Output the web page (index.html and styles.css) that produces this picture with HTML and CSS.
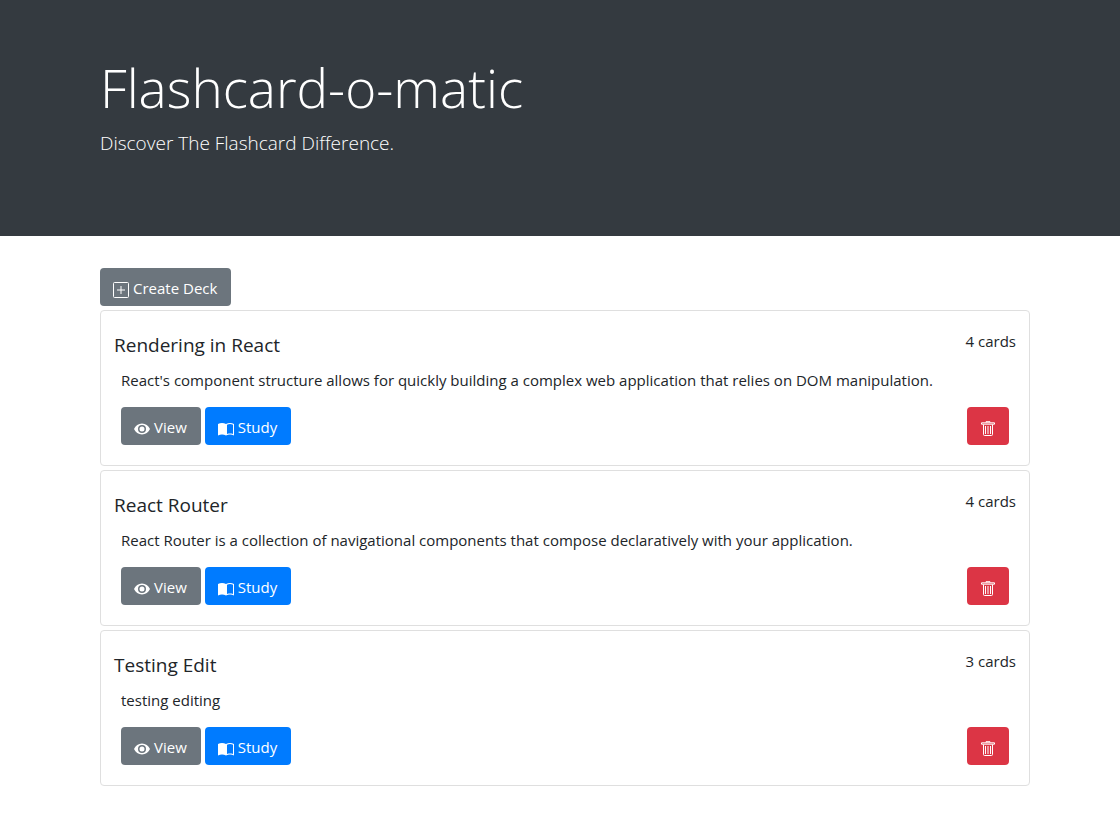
FILE: index.html
```html
<!DOCTYPE html>
<html lang="en">
<head>
<meta charset="utf-8">
<meta name="viewport" content="width=device-width, initial-scale=1">
<title>Flashcard-o-matic</title>
<link rel="stylesheet" href="styles.css">
</head>
<body>
<svg class="sprite" aria-hidden="true">
  <symbol id="plus" viewBox="0 0 16 16"><rect x=".5" y=".5" width="15" height="15" rx="1" fill="none" stroke="currentColor"/><path d="M8 4v8M4 8h8" fill="none" stroke="currentColor"/></symbol>
  <symbol id="eye" viewBox="0 0 16 16"><path fill="currentColor" fill-rule="evenodd" d="M8 2.5C4.4 2.5 1.500 4.700 0 8c1.500 3.300 4.400 5.500 8 5.500s6.500-2.200 8-5.500c-1.500-3.300-4.400-5.500-8-5.500zM8 4a4 4 0 1 1 0 8 4 4 0 0 1 0-8zm0 1.500a2.500 2.500 0 1 0 0 5 2.500 2.500 0 0 0 0-5z"/></symbol>
  <symbol id="book" viewBox="0 0 16 16"><path fill="currentColor" fill-rule="evenodd" d="M0 3C2.500 1.600 5.500 1.600 8 3c2.500-1.400 5.500-1.400 8 0v11.500c-2.500-1.200-5.500-1.200-8 0-2.500-1.200-5.500-1.200-8 0zM9 3.700v9.300c2-.6 4-.6 6 0V3.700c-2-.8-4-.8-6 0z"/></symbol>
  <symbol id="trash" viewBox="0 0 16 16"><path fill="none" stroke="currentColor" d="M1.500 1.800h13v1.400h-13zM6 1.500V.7h4v.8M3.500 3.500v10a1 1 0 0 0 1 1h7a1 1 0 0 0 1-1v-10M5.500 5v8M10.500 5v8"/><path fill="none" stroke="currentColor" stroke-width="2" opacity=".5" d="M8 5v8"/></symbol>
</svg>
<header class="hero">
  <div class="container">
    <h1 class="hero-title">Flashcard-o-matic</h1>
    <p class="hero-lead">Discover The Flashcard Difference.</p>
  </div>
</header>
<main class="container">
  <button class="btn btn-secondary" type="button"><svg class="icon"><use href="#plus"/></svg>Create Deck</button>
  <article class="deck">
    <div class="deck-head"><h2 class="deck-title">Rendering in React</h2><span>4 cards</span></div>
    <p class="deck-text">React's component structure allows for quickly building a complex web application that relies on DOM manipulation.</p>
    <div class="deck-actions">
      <button class="btn btn-secondary" type="button"><svg class="icon"><use href="#eye"/></svg>View</button>
      <button class="btn btn-primary" type="button"><svg class="icon"><use href="#book"/></svg>Study</button>
      <button class="btn btn-danger" type="button" aria-label="Delete deck"><svg class="icon"><use href="#trash"/></svg></button>
    </div>
  </article>
  <article class="deck">
    <div class="deck-head"><h2 class="deck-title">React Router</h2><span>4 cards</span></div>
    <p class="deck-text">React Router is a collection of navigational components that compose declaratively with your application.</p>
    <div class="deck-actions">
      <button class="btn btn-secondary" type="button"><svg class="icon"><use href="#eye"/></svg>View</button>
      <button class="btn btn-primary" type="button"><svg class="icon"><use href="#book"/></svg>Study</button>
      <button class="btn btn-danger" type="button" aria-label="Delete deck"><svg class="icon"><use href="#trash"/></svg></button>
    </div>
  </article>
  <article class="deck">
    <div class="deck-head"><h2 class="deck-title">Testing Edit</h2><span>3 cards</span></div>
    <p class="deck-text">testing editing</p>
    <div class="deck-actions">
      <button class="btn btn-secondary" type="button"><svg class="icon"><use href="#eye"/></svg>View</button>
      <button class="btn btn-primary" type="button"><svg class="icon"><use href="#book"/></svg>Study</button>
      <button class="btn btn-danger" type="button" aria-label="Delete deck"><svg class="icon"><use href="#trash"/></svg></button>
    </div>
  </article>
</main>
</body>
</html>
```
FILE: styles.css
```css
* {
  box-sizing: border-box;
}

body {
  margin: 0;
  background: #fff;
  color: #212529;
  font-family: "Segoe UI", "Open Sans", "Noto Sans", sans-serif;
  font-size: 15px;
  line-height: 24px;
}

h1, h2, p {
  margin: 0;
}

.sprite {
  display: none;
}

.container {
  max-width: 960px;
  margin: 0 auto;
  padding: 0 10px 0 20px;
}

.hero {
  margin-bottom: 32px;
  padding: 56px 0 78px;
  background: #343a40;
  color: #fff;
}

.hero-title {
  margin-bottom: 8px;
  font-size: 53px;
  font-weight: 300;
  line-height: 64px;
}

.hero-lead {
  font-size: 19px;
  font-weight: 300;
  line-height: 30px;
}

main.container {
  padding-bottom: 48px;
}

.btn {
  display: inline-flex;
  align-items: center;
  gap: 4px;
  height: 38px;
  padding: 1px 14px 0 13px;
  border: 0;
  border-radius: 4px;
  color: #fff;
  font: inherit;
  cursor: pointer;
}

.btn-secondary {
  background: #6c757d;
}

.btn-primary {
  background: #007bff;
}

.btn-danger {
  margin-left: auto;
  padding-right: 13px;
  background: #dc3545;
}

.icon {
  flex: none;
  width: 16px;
  height: 16px;
  margin-top: 4px;
}

.deck {
  margin-top: 4px;
  padding: 18px 13px 20px;
  border: 1px solid #dfdfdf;
  border-radius: 4px;
}

.deck-head {
  display: flex;
  justify-content: space-between;
}

.deck-title {
  padding-top: 4px;
  font-size: 19px;
  font-weight: 400;
  line-height: 24px;
}

.deck-text {
  padding: 11px 7px 15px;
}

.deck-actions {
  display: flex;
  gap: 4px;
  padding: 0 7px;
}
```
